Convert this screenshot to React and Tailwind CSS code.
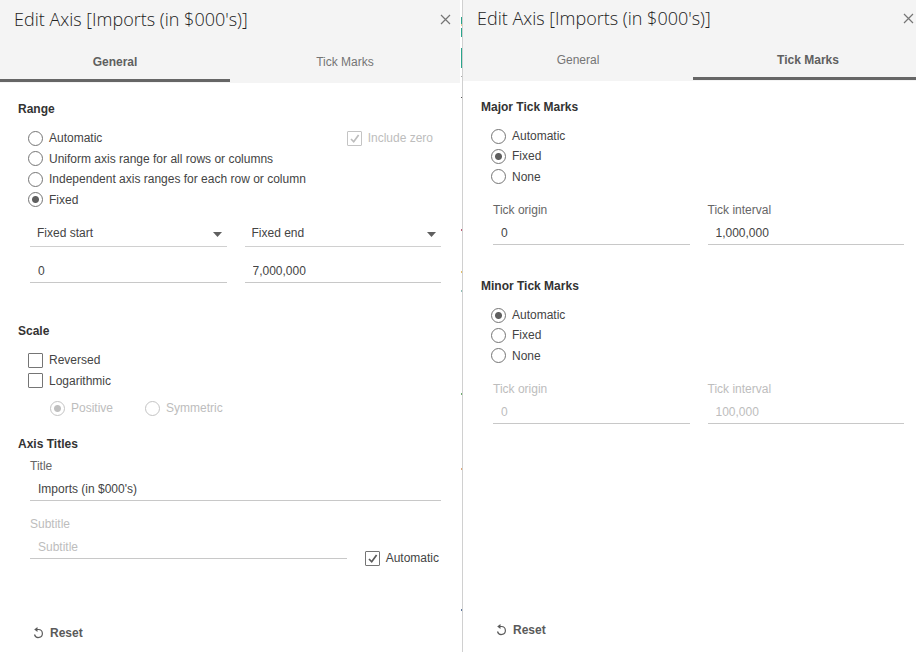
import { useId, useState } from "react";

const ring =
  "size-[15px] shrink-0 appearance-none rounded-full border border-[#757575] bg-white checked:bg-[radial-gradient(circle,#5f5f5f_3px,transparent_4px)] disabled:border-[#c4c4c4] disabled:checked:bg-[radial-gradient(circle,#c0c0c0_3px,transparent_4px)]";

function Radio({ name, label, checked, disabled, onChange }) {
  return (
    <label className={`flex items-center gap-[6px] ${disabled ? "text-[#bdbdbd]" : "text-[#444]"}`}>
      <input type="radio" name={name} checked={checked} disabled={disabled} onChange={onChange} className={ring} />
      {label}
    </label>
  );
}

function RadioGroup({ options, initial, className }) {
  const name = useId();
  const [value, setValue] = useState(initial);
  return (
    <div role="radiogroup" className={`mt-[9px] ml-[28px] grid auto-rows-fr justify-items-start ${className}`}>
      {options.map((o) => (
        <Radio key={o} name={name} label={o} checked={value === o} onChange={() => setValue(o)} />
      ))}
    </div>
  );
}

function Check({ label, initial = false, disabled }) {
  const [on, setOn] = useState(initial);
  return (
    <label className={`flex items-center gap-[6px] ${disabled ? "text-[#bdbdbd]" : "text-[#444]"}`}>
      <span className="grid size-[15px] shrink-0">
        <input
          type="checkbox"
          checked={on}
          disabled={disabled}
          onChange={() => setOn(!on)}
          className="col-start-1 row-start-1 appearance-none rounded-[1px] border border-[#757575] bg-white disabled:border-[#c4c4c4]"
        />
        {on && (
          <svg viewBox="0 0 15 15" className={`pointer-events-none col-start-1 row-start-1 ${disabled ? "text-[#bdbdbd]" : "text-[#5a5a5a]"}`} fill="none" stroke="currentColor" strokeWidth="1.7">
            <path d="M4 8l2.7 2.8L11.600 4" />
          </svg>
        )}
      </span>
      {label}
    </label>
  );
}

const line = "block h-[23px] w-full border-b border-[#c8c8c8] bg-transparent px-2 text-[#444] outline-none placeholder:text-[#bdbdbd] disabled:text-[#bdbdbd]";

function Field({ label, value, placeholder, disabled, dim }) {
  const id = useId();
  return (
    <div className="min-w-0 flex-1">
      <label htmlFor={id} className={`mb-[2px] block ${disabled || dim ? "text-[#bdbdbd]" : "text-[#666]"}`}>
        {label}
      </label>
      <input id={id} defaultValue={value} placeholder={placeholder} disabled={disabled} className={line} />
    </div>
  );
}

function Range({ label, value }) {
  return (
    <div className="min-w-0 flex-1">
      <div className="relative">
        <select aria-label={label} className="block h-[27px] w-full appearance-none border-b border-[#d0d0d0] bg-transparent px-[7px] text-[#444] outline-none">
          <option>{label}</option>
        </select>
        <svg viewBox="0 0 9 5" className="pointer-events-none absolute top-3 right-[5px] h-[5px] w-[9px] fill-[#5f5f5f]">
          <path d="M0 0h9L4.500 5z" />
        </svg>
      </div>
      <input aria-label={`${label} value`} defaultValue={value} className={`mt-[13px] ${line}`} />
    </div>
  );
}

function Heading({ children, className = "" }) {
  return <h2 className={`ml-[18px] font-bold text-[#333] ${className}`}>{children}</h2>;
}

function Dialog({ active, titleHeight, footer, children }) {
  return (
    <section className="flex min-w-0 flex-1 flex-col bg-white">
      <header className="bg-[#f4f4f4] pb-px">
        <div className={`flex items-center justify-between pr-[9px] pl-[14px] ${titleHeight}`}>
          <h1 className="font-['Open_Sans',sans-serif] text-[18px] font-light text-[#222]">Edit Axis [Imports (in $000's)]</h1>
          <button type="button" aria-label="Close" className="text-[#757575]">
            <svg viewBox="0 0 11 11" className="size-[11px]" fill="none" stroke="currentColor" strokeWidth="1.2">
              <path d="M1 1l9 9M10 1l-9 9" />
            </svg>
          </button>
        </div>
        <div role="tablist" className="flex h-[44px]">
          {["General", "Tick Marks"].map((t) => (
            <button
              key={t}
              type="button"
              role="tab"
              aria-selected={t === active}
              className={`flex-1 border-b-[3px] pt-[7px] ${t === active ? "border-[#666] font-bold text-[#5f5f5f]" : "border-transparent text-[#757575]"}`}
            >
              {t}
            </button>
          ))}
        </div>
      </header>
      <div className="flex flex-1 flex-col pt-4 pr-[19px]">
        {children}
        <div className={`mt-auto ml-[33px] ${footer}`}>
          <button type="button" className="flex items-center gap-[6px] font-bold text-[#5a5a5a]">
            <svg viewBox="0 0 11 12" className="h-[12px] w-[11px]" fill="none" stroke="currentColor" strokeWidth="1.200">
              <path d="M3.500 2.500h2a4 4 0 1 1-4 5" />
              <path d="M4.500 0v5L1.200 2.500z" fill="currentColor" stroke="none" />
            </svg>
            Reset
          </button>
        </div>
      </div>
    </section>
  );
}

export default function App() {
  return (
    <main className="overflow-hidden bg-white font-['Liberation_Sans',Arial,sans-serif] text-[12px] leading-[20px]">
      <div className="-mr-[7px] flex min-h-screen">
        <Dialog active="General" titleHeight="h-[38px]" footer="pb-[9px]">
          <Heading>Range</Heading>
          <div className="flex items-start justify-between">
            <RadioGroup
              initial="Fixed"
              className="h-[82px]"
              options={["Automatic", "Uniform axis range for all rows or columns", "Independent axis ranges for each row or column", "Fixed"]}
            />
            <div className="mt-[9px] mr-2">
              <Check label="Include zero" initial disabled />
            </div>
          </div>
          <div className="mt-[10px] ml-[30px] flex gap-[18px]">
            <Range label="Fixed start" value="0" />
            <Range label="Fixed end" value="7,000,000" />
          </div>
          <Heading className="mt-[38px]">Scale</Heading>
          <div className="mt-[9px] ml-[28px] grid h-[41px] auto-rows-fr justify-items-start">
            <Check label="Reversed" />
            <Check label="Logarithmic" />
          </div>
          <div className="mt-[7px] ml-[50px] flex gap-[32px]">
            <Radio name="log" label="Positive" checked disabled />
            <Radio name="log" label="Symmetric" checked={false} disabled />
          </div>
          <Heading className="mt-[16px]">Axis Titles</Heading>
          <div className="mt-[2px] ml-[30px] flex">
            <Field label="Title" value="Imports (in $000's)" />
          </div>
          <div className="mt-[13px] ml-[30px] flex items-end gap-[18px]">
            <Field label="Subtitle" placeholder="Subtitle" dim />
            <div className="mr-[2px] -mb-[9px]">
              <Check label="Automatic" initial />
            </div>
          </div>
        </Dialog>
        <div aria-hidden="true" className="w-[3px] shrink-0 border-r border-[#d0d0d0]">
          <svg viewBox="0 0 2 652" className="h-[652px] w-[2px]" shapeRendering="crispEdges">
            <path d="M1 17h1v7h-1zM1 28h1v9h-1zM1 48h1v20h-1z" fill="#2aa58c" />
            <path d="M1 24h1v2h-1z" fill="#e0cf9a" />
            <path d="M1 97h1v1h-1z" fill="#555" />
            <path d="M1 76h1v1h-1z" fill="#aaa" />
            <path d="M1 229h1v2h-1z" fill="#c06078" />
            <path d="M1 271h1v2h-1z" fill="#e3c06a" />
            <path d="M1 290h1v2h-1z" fill="#8fc0b8" />
            <path d="M1 393h1v2h-1z" fill="#6fae6f" />
            <path d="M1 468h1v2h-1z" fill="#e2a878" />
            <path d="M1 609h1v2h-1z" fill="#5f79a0" />
          </svg>
        </div>
        <Dialog active="Tick Marks" titleHeight="h-[36px]" footer="pb-[12px]">
          <Heading>Major Tick Marks</Heading>
          <RadioGroup initial="Fixed" className="h-[61px]" options={["Automatic", "Fixed", "None"]} />
          <div className="mt-[13px] ml-[30px] flex gap-[18px]">
            <Field label="Tick origin" value="0" />
            <Field label="Tick interval" value="1,000,000" />
          </div>
          <Heading className="mt-[31px]">Minor Tick Marks</Heading>
          <RadioGroup initial="Automatic" className="h-[61px]" options={["Automatic", "Fixed", "None"]} />
          <div className="mt-[13px] ml-[30px] flex gap-[18px]">
            <Field label="Tick origin" value="0" disabled />
            <Field label="Tick interval" value="100,000" disabled />
          </div>
        </Dialog>
      </div>
    </main>
  );
}
